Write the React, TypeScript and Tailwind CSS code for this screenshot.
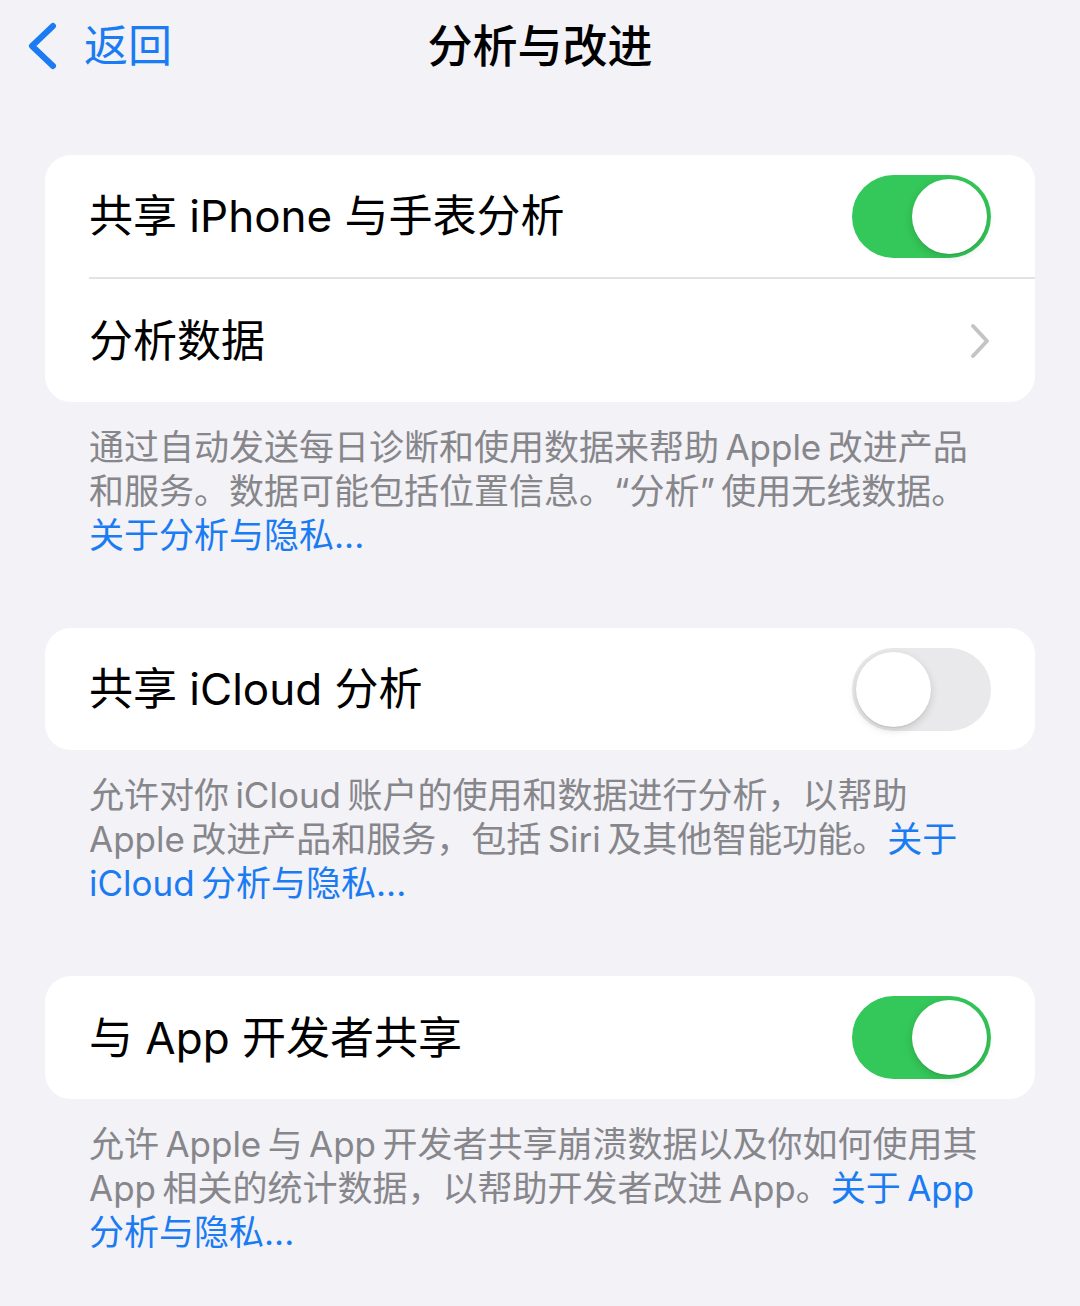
import React, { useState } from 'react';

const FONT = "font-['Inter','Noto_Sans_CJK_SC',sans-serif]";

function Toggle({ on, onClick }: { on: boolean; onClick: () => void }) {
  return (
    <button
      onClick={onClick}
      className={`relative h-[83px] w-[139px] shrink-0 rounded-full transition-colors ${on ? 'bg-[#34c759]' : 'bg-[#e9e9eb]'}`}
    >
      <span
        className={`absolute top-[4px] h-[75px] w-[75px] rounded-full bg-white shadow-[0_3px_8px_rgba(0,0,0,0.15),0_1px_1px_rgba(0,0,0,0.08)] transition-all ${on ? 'left-[60px]' : 'left-[4px]'}`}
      />
    </button>
  );
}

function Footer({ children }: { children: React.ReactNode }) {
  return (
    <p className="whitespace-nowrap pl-[89px] pt-[23px] text-[35px] leading-[44px] text-[#86868b]">
      {children}
    </p>
  );
}

const Link = ({ children }: { children: React.ReactNode }) => (
  <span className="text-[#1a7bf2]">{children}</span>
);

export default function App() {
  const [iphone, setIphone] = useState(true);
  const [icloud, setIcloud] = useState(false);
  const [dev, setDev] = useState(true);

  return (
    <div className={`min-h-[1306px] w-[1080px] bg-[#f2f2f7] ${FONT} text-black`}>
      {/* 顶部导航 */}
      <div className="relative flex h-[92px] items-center">
        <div className="flex items-center pl-[24px]">
          <svg width="36" height="48" viewBox="0 0 36 48" fill="none">
            <path d="M29 4 L8 24 L29 44" stroke="#1a7bf2" strokeWidth="6" strokeLinecap="round" strokeLinejoin="round" />
          </svg>
          <span className="ml-[24px] text-[44px] leading-none text-[#1a7bf2]">返回</span>
        </div>
        <h1 className="absolute left-1/2 -translate-x-1/2 text-[45px] font-medium leading-none">分析与改进</h1>
      </div>

      {/* 卡片 1 */}
      <div className="mx-[45px] mt-[63px] overflow-hidden rounded-[26px] bg-white">
        <div className="flex h-[122px] items-center justify-between pl-[44px] pr-[44px]">
          <span className="text-[44px] leading-none">共享 iPhone 与手表分析</span>
          <Toggle on={iphone} onClick={() => setIphone(!iphone)} />
        </div>
        <div className="ml-[44px] h-[2px] bg-[#e2e2e5]" />
        <div className="flex h-[123px] items-center justify-between pl-[44px] pr-[44px]">
          <span className="text-[44px] leading-none">分析数据</span>
          <svg width="22" height="36" viewBox="0 0 22 36" fill="none">
            <path d="M4 3 L18 18 L4 33" stroke="#c4c4c7" strokeWidth="4" strokeLinecap="round" strokeLinejoin="round" />
          </svg>
        </div>
      </div>
      <Footer>
        通过自动发送每日诊断和使用数据来帮助{'\u2009'}Apple{'\u2009'}改进产品
        <br />
        和服务。数据可能包括位置信息。“分析”{'\u2009'}使用无线数据。
        <br />
        <Link>关于分析与隐私...</Link>
      </Footer>

      {/* 卡片 2 */}
      <div className="mx-[45px] mt-[71px] rounded-[26px] bg-white">
        <div className="flex h-[122px] items-center justify-between pl-[44px] pr-[44px]">
          <span className="text-[44px] leading-none">共享 iCloud 分析</span>
          <Toggle on={icloud} onClick={() => setIcloud(!icloud)} />
        </div>
      </div>
      <Footer>
        允许对你{'\u2009'}iCloud{'\u2009'}账户的使用和数据进行分析，以帮助
        <br />
        Apple{'\u2009'}改进产品和服务，包括{'\u2009'}Siri{'\u2009'}及其他智能功能。<Link>关于</Link>
        <br />
        <Link>iCloud{'\u2009'}分析与隐私...</Link>
      </Footer>

      {/* 卡片 3 */}
      <div className="mx-[45px] mt-[71px] rounded-[26px] bg-white">
        <div className="flex h-[123px] items-center justify-between pl-[44px] pr-[44px]">
          <span className="text-[44px] leading-none">与 App 开发者共享</span>
          <Toggle on={dev} onClick={() => setDev(!dev)} />
        </div>
      </div>
      <Footer>
        允许{'\u2009'}Apple{'\u2009'}与{'\u2009'}App{'\u2009'}开发者共享崩溃数据以及你如何使用其
        <br />
        App{'\u2009'}相关的统计数据，以帮助开发者改进{'\u2009'}App。<Link>关于{'\u2009'}App</Link>
        <br />
        <Link>分析与隐私...</Link>
      </Footer>
    </div>
  );
}
